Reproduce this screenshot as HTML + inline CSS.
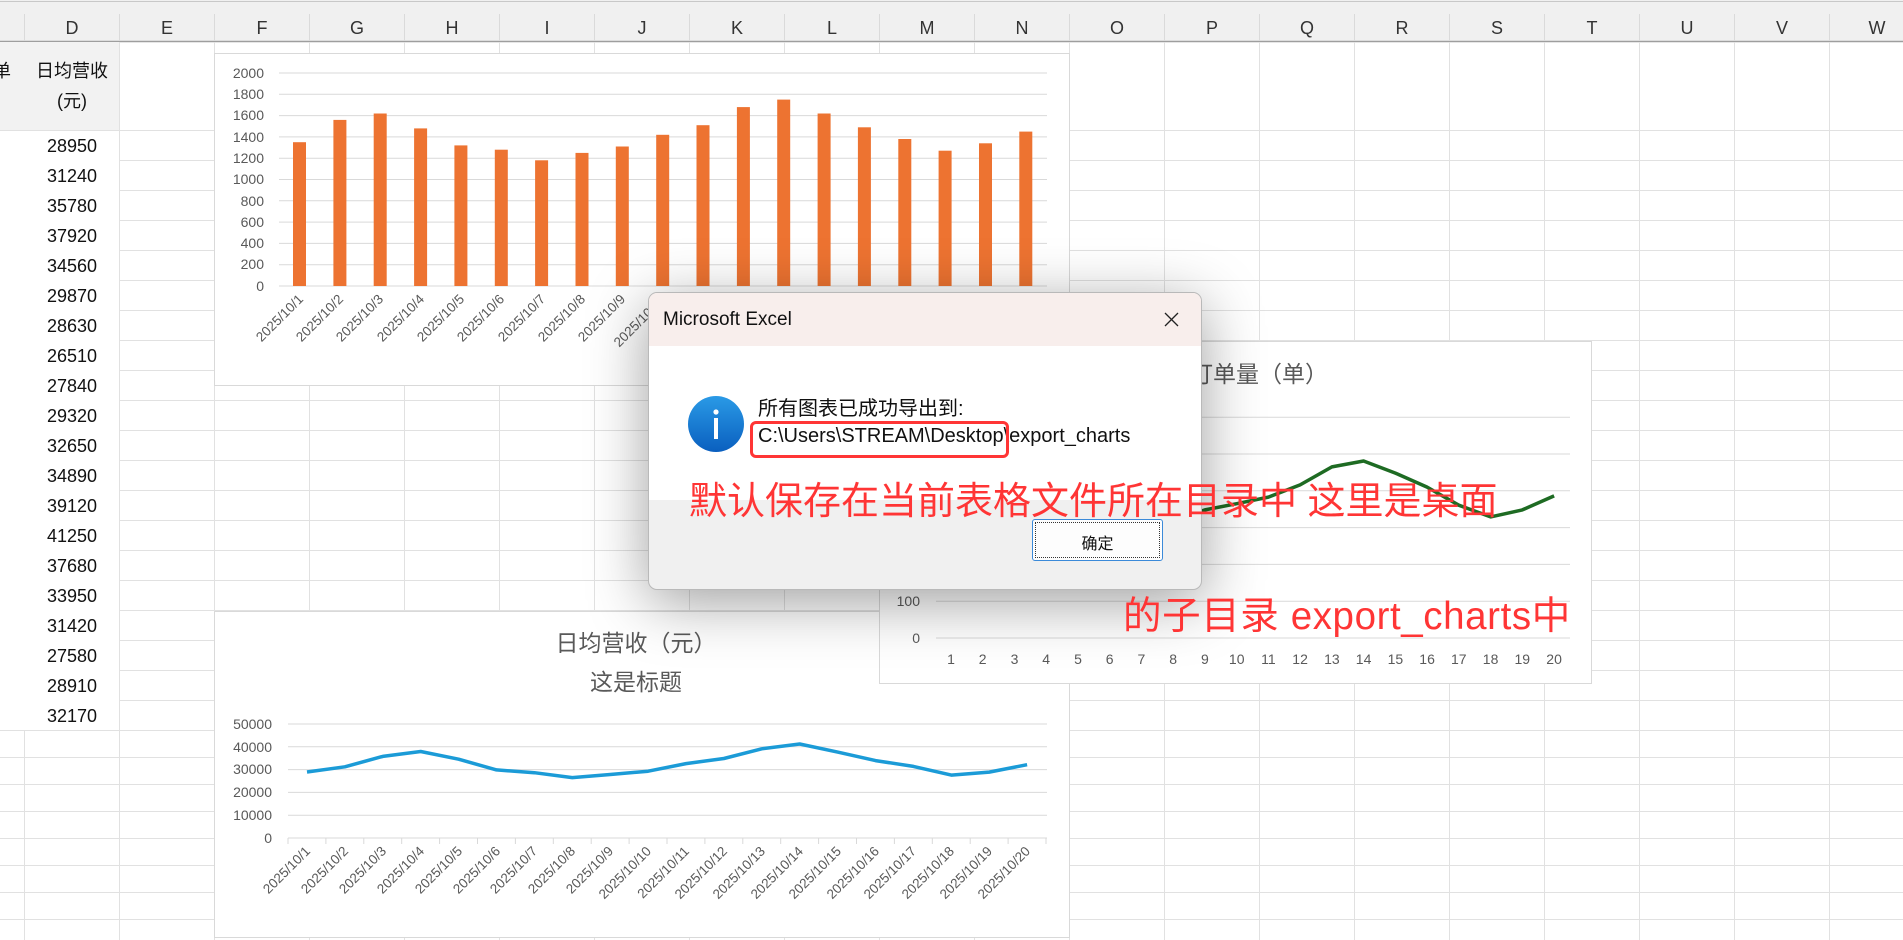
<!DOCTYPE html>
<html><head><meta charset="utf-8"><style>
body{margin:0;width:1903px;height:940px;overflow:hidden;background:#fff;font-family:"Liberation Sans","Noto Sans CJK SC",sans-serif;position:relative}
svg{position:absolute;left:0;top:0}
.dlg{position:absolute;left:648px;top:292px;width:552px;height:296px;border:1px solid #b9b9b9;border-radius:9px;background:#f0f0f0;box-shadow:0 12px 60px rgba(0,0,0,.38);overflow:hidden}
.red{position:absolute;color:#ff3535;font-size:38px;white-space:nowrap;font-family:"Liberation Sans","Noto Sans CJK SC",sans-serif;line-height:1}
</style></head><body>
<svg width="1903" height="940" font-family="Liberation Sans, Noto Sans CJK SC, sans-serif">
<rect x="0" y="0" width="1903" height="42" fill="#f0f0f0"/>
<line x1="0" y1="1.5" x2="1903" y2="1.5" stroke="#c8c8c8"/>
<line x1="0" y1="41.5" x2="1903" y2="41.5" stroke="#9e9e9e" stroke-width="1.5"/>
<g stroke="#dadada">
<line x1="24.5" y1="14" x2="24.5" y2="41"/><line x1="119.5" y1="14" x2="119.5" y2="41"/><line x1="214.5" y1="14" x2="214.5" y2="41"/><line x1="309.5" y1="14" x2="309.5" y2="41"/><line x1="404.5" y1="14" x2="404.5" y2="41"/><line x1="499.5" y1="14" x2="499.5" y2="41"/><line x1="594.5" y1="14" x2="594.5" y2="41"/><line x1="689.5" y1="14" x2="689.5" y2="41"/><line x1="784.5" y1="14" x2="784.5" y2="41"/><line x1="879.5" y1="14" x2="879.5" y2="41"/><line x1="974.5" y1="14" x2="974.5" y2="41"/><line x1="1069.5" y1="14" x2="1069.5" y2="41"/><line x1="1164.5" y1="14" x2="1164.5" y2="41"/><line x1="1259.5" y1="14" x2="1259.5" y2="41"/><line x1="1354.5" y1="14" x2="1354.5" y2="41"/><line x1="1449.5" y1="14" x2="1449.5" y2="41"/><line x1="1544.5" y1="14" x2="1544.5" y2="41"/><line x1="1639.5" y1="14" x2="1639.5" y2="41"/><line x1="1734.5" y1="14" x2="1734.5" y2="41"/><line x1="1829.5" y1="14" x2="1829.5" y2="41"/>
</g>
<g font-size="18" fill="#333" text-anchor="middle">
<text x="72" y="34">D</text><text x="167" y="34">E</text><text x="262" y="34">F</text><text x="357" y="34">G</text><text x="452" y="34">H</text><text x="547" y="34">I</text><text x="642" y="34">J</text><text x="737" y="34">K</text><text x="832" y="34">L</text><text x="927" y="34">M</text><text x="1022" y="34">N</text><text x="1117" y="34">O</text><text x="1212" y="34">P</text><text x="1307" y="34">Q</text><text x="1402" y="34">R</text><text x="1497" y="34">S</text><text x="1592" y="34">T</text><text x="1687" y="34">U</text><text x="1782" y="34">V</text><text x="1877" y="34">W</text>
</g>
<g stroke="#e1e1e1">
<line x1="119.5" y1="42" x2="119.5" y2="940"/><line x1="214.5" y1="42" x2="214.5" y2="940"/><line x1="309.5" y1="42" x2="309.5" y2="940"/><line x1="404.5" y1="42" x2="404.5" y2="940"/><line x1="499.5" y1="42" x2="499.5" y2="940"/><line x1="594.5" y1="42" x2="594.5" y2="940"/><line x1="689.5" y1="42" x2="689.5" y2="940"/><line x1="784.5" y1="42" x2="784.5" y2="940"/><line x1="879.5" y1="42" x2="879.5" y2="940"/><line x1="974.5" y1="42" x2="974.5" y2="940"/><line x1="1069.5" y1="42" x2="1069.5" y2="940"/><line x1="1164.5" y1="42" x2="1164.5" y2="940"/><line x1="1259.5" y1="42" x2="1259.5" y2="940"/><line x1="1354.5" y1="42" x2="1354.5" y2="940"/><line x1="1449.5" y1="42" x2="1449.5" y2="940"/><line x1="1544.5" y1="42" x2="1544.5" y2="940"/><line x1="1639.5" y1="42" x2="1639.5" y2="940"/><line x1="1734.5" y1="42" x2="1734.5" y2="940"/><line x1="1829.5" y1="42" x2="1829.5" y2="940"/>
<line x1="24.5" y1="730" x2="24.5" y2="940"/>
<line x1="0" y1="130.5" x2="1903" y2="130.5"/><line x1="0" y1="160.5" x2="1903" y2="160.5"/><line x1="0" y1="190.5" x2="1903" y2="190.5"/><line x1="0" y1="220.5" x2="1903" y2="220.5"/><line x1="0" y1="250.5" x2="1903" y2="250.5"/><line x1="0" y1="280.5" x2="1903" y2="280.5"/><line x1="0" y1="310.5" x2="1903" y2="310.5"/><line x1="0" y1="340.5" x2="1903" y2="340.5"/><line x1="0" y1="370.5" x2="1903" y2="370.5"/><line x1="0" y1="400.5" x2="1903" y2="400.5"/><line x1="0" y1="430.5" x2="1903" y2="430.5"/><line x1="0" y1="460.5" x2="1903" y2="460.5"/><line x1="0" y1="490.5" x2="1903" y2="490.5"/><line x1="0" y1="520.5" x2="1903" y2="520.5"/><line x1="0" y1="550.5" x2="1903" y2="550.5"/><line x1="0" y1="580.5" x2="1903" y2="580.5"/><line x1="0" y1="610.5" x2="1903" y2="610.5"/><line x1="0" y1="640.5" x2="1903" y2="640.5"/><line x1="0" y1="670.5" x2="1903" y2="670.5"/><line x1="0" y1="700.5" x2="1903" y2="700.5"/><line x1="0" y1="730.5" x2="1903" y2="730.5"/><line x1="0" y1="757.5" x2="1903" y2="757.5"/><line x1="0" y1="784.5" x2="1903" y2="784.5"/><line x1="0" y1="811.5" x2="1903" y2="811.5"/><line x1="0" y1="838.5" x2="1903" y2="838.5"/><line x1="0" y1="865.5" x2="1903" y2="865.5"/><line x1="0" y1="892.5" x2="1903" y2="892.5"/><line x1="0" y1="919.5" x2="1903" y2="919.5"/>
</g>
<rect x="0" y="42" width="119" height="88" fill="#f2f2f2"/>
<rect x="0" y="131" width="119" height="599" fill="#fff"/>
<g font-size="18" fill="#111">
<text x="-7" y="77">单</text><text x="-6" y="107">)</text>
<text x="72" y="77" text-anchor="middle">日均营收</text><text x="72" y="107" text-anchor="middle">(元)</text>
</g>
<g font-size="18" fill="#111" text-anchor="end">
<text x="97" y="152">28950</text><text x="97" y="182">31240</text><text x="97" y="212">35780</text><text x="97" y="242">37920</text><text x="97" y="272">34560</text><text x="97" y="302">29870</text><text x="97" y="332">28630</text><text x="97" y="362">26510</text><text x="97" y="392">27840</text><text x="97" y="422">29320</text><text x="97" y="452">32650</text><text x="97" y="482">34890</text><text x="97" y="512">39120</text><text x="97" y="542">41250</text><text x="97" y="572">37680</text><text x="97" y="602">33950</text><text x="97" y="632">31420</text><text x="97" y="662">27580</text><text x="97" y="692">28910</text><text x="97" y="722">32170</text>
</g>

<rect x="214.5" y="53.5" width="855" height="332" fill="#fff" stroke="#d9d9d9"/>
<g stroke="#d9d9d9">
<line x1="279" y1="73" x2="1047" y2="73"/><line x1="279" y1="94.3" x2="1047" y2="94.3"/><line x1="279" y1="115.6" x2="1047" y2="115.6"/><line x1="279" y1="136.9" x2="1047" y2="136.9"/><line x1="279" y1="158.2" x2="1047" y2="158.2"/><line x1="279" y1="179.5" x2="1047" y2="179.5"/><line x1="279" y1="200.8" x2="1047" y2="200.8"/><line x1="279" y1="222.1" x2="1047" y2="222.1"/><line x1="279" y1="243.4" x2="1047" y2="243.4"/><line x1="279" y1="264.7" x2="1047" y2="264.7"/><line x1="279" y1="286" x2="1047" y2="286"/>
</g>
<g font-size="14" fill="#595959" text-anchor="end">
<text x="264" y="78">2000</text><text x="264" y="99">1800</text><text x="264" y="120">1600</text><text x="264" y="142">1400</text><text x="264" y="163">1200</text><text x="264" y="184">1000</text><text x="264" y="206">800</text><text x="264" y="227">600</text><text x="264" y="248">400</text><text x="264" y="269">200</text><text x="264" y="291">0</text>
</g>
<g fill="#ed7331">
<rect x="293" y="142.2" width="13" height="143.8"/><rect x="333.4" y="119.9" width="13" height="166.1"/><rect x="373.7" y="113.5" width="13" height="172.5"/><rect x="414.1" y="128.4" width="13" height="157.6"/><rect x="454.4" y="145.4" width="13" height="140.6"/><rect x="494.8" y="149.7" width="13" height="136.3"/><rect x="535.1" y="160.3" width="13" height="125.7"/><rect x="575.5" y="152.9" width="13" height="133.1"/><rect x="615.8" y="146.5" width="13" height="139.5"/><rect x="656.2" y="134.8" width="13" height="151.2"/><rect x="696.5" y="125.2" width="13" height="160.8"/><rect x="736.9" y="107.1" width="13" height="178.9"/><rect x="777.2" y="99.6" width="13" height="186.4"/><rect x="817.6" y="113.5" width="13" height="172.5"/><rect x="857.9" y="127.3" width="13" height="158.7"/><rect x="898.3" y="139" width="13" height="147"/><rect x="938.6" y="150.7" width="13" height="135.3"/><rect x="979" y="143.3" width="13" height="142.7"/><rect x="1019.3" y="131.6" width="13" height="154.4"/>
</g>
<g font-size="13.5" fill="#595959" text-anchor="end">
<text transform="translate(304,300) rotate(-45)">2025/10/1</text><text transform="translate(344,300) rotate(-45)">2025/10/2</text><text transform="translate(384,300) rotate(-45)">2025/10/3</text><text transform="translate(425,300) rotate(-45)">2025/10/4</text><text transform="translate(465,300) rotate(-45)">2025/10/5</text><text transform="translate(505,300) rotate(-45)">2025/10/6</text><text transform="translate(546,300) rotate(-45)">2025/10/7</text><text transform="translate(586,300) rotate(-45)">2025/10/8</text><text transform="translate(626,300) rotate(-45)">2025/10/9</text><text transform="translate(667,300) rotate(-45)">2025/10/10</text><text transform="translate(707,300) rotate(-45)">2025/10/11</text><text transform="translate(747,300) rotate(-45)">2025/10/12</text><text transform="translate(788,300) rotate(-45)">2025/10/13</text><text transform="translate(828,300) rotate(-45)">2025/10/14</text><text transform="translate(868,300) rotate(-45)">2025/10/15</text><text transform="translate(909,300) rotate(-45)">2025/10/16</text><text transform="translate(949,300) rotate(-45)">2025/10/17</text><text transform="translate(989,300) rotate(-45)">2025/10/18</text><text transform="translate(1030,300) rotate(-45)">2025/10/19</text>
</g>

<rect x="214.5" y="611.5" width="855" height="326" fill="#fff" stroke="#d9d9d9"/>
<g font-size="23" fill="#595959" text-anchor="middle">
<text x="636" y="651">日均营收（元）</text><text x="636" y="690">这是标题</text>
</g>
<g stroke="#d9d9d9">
<line x1="288" y1="724" x2="1047" y2="724"/><line x1="288" y1="746.8" x2="1047" y2="746.8"/><line x1="288" y1="769.6" x2="1047" y2="769.6"/><line x1="288" y1="792.4" x2="1047" y2="792.4"/><line x1="288" y1="815.2" x2="1047" y2="815.2"/><line x1="288" y1="838" x2="1047" y2="838"/>
<path d="M288 838v6M325.9 838v6M363.8 838v6M401.7 838v6M439.6 838v6M477.5 838v6M515.4 838v6M553.3 838v6M591.2 838v6M629.1 838v6M667 838v6M704.9 838v6M742.8 838v6M780.7 838v6M818.6 838v6M856.5 838v6M894.4 838v6M932.3 838v6M970.2 838v6M1008.1 838v6M1046 838v6"/>
</g>
<g font-size="14" fill="#595959" text-anchor="end">
<text x="272" y="729">50000</text><text x="272" y="752">40000</text><text x="272" y="774">30000</text><text x="272" y="797">20000</text><text x="272" y="820">10000</text><text x="272" y="843">0</text>
</g>
<polyline fill="none" stroke="#1b9bd7" stroke-width="3.5" stroke-linejoin="round" points="307,772 344.9,766.8 382.8,756.4 420.7,751.5 458.6,759.2 496.5,769.9 534.4,772.7 572.3,777.6 610.2,774.5 648.1,771.2 686,763.6 723.9,758.5 761.8,748.8 799.7,744 837.6,752.1 875.5,760.6 913.4,766.4 951.3,775.1 989.2,772.1 1027.1,764.7"/>
<g font-size="13.5" fill="#595959" text-anchor="end">
<text transform="translate(311,852) rotate(-45)">2025/10/1</text><text transform="translate(349,852) rotate(-45)">2025/10/2</text><text transform="translate(387,852) rotate(-45)">2025/10/3</text><text transform="translate(425,852) rotate(-45)">2025/10/4</text><text transform="translate(463,852) rotate(-45)">2025/10/5</text><text transform="translate(501,852) rotate(-45)">2025/10/6</text><text transform="translate(538,852) rotate(-45)">2025/10/7</text><text transform="translate(576,852) rotate(-45)">2025/10/8</text><text transform="translate(614,852) rotate(-45)">2025/10/9</text><text transform="translate(652,852) rotate(-45)">2025/10/10</text><text transform="translate(690,852) rotate(-45)">2025/10/11</text><text transform="translate(728,852) rotate(-45)">2025/10/12</text><text transform="translate(766,852) rotate(-45)">2025/10/13</text><text transform="translate(804,852) rotate(-45)">2025/10/14</text><text transform="translate(842,852) rotate(-45)">2025/10/15</text><text transform="translate(880,852) rotate(-45)">2025/10/16</text><text transform="translate(917,852) rotate(-45)">2025/10/17</text><text transform="translate(955,852) rotate(-45)">2025/10/18</text><text transform="translate(993,852) rotate(-45)">2025/10/19</text><text transform="translate(1031,852) rotate(-45)">2025/10/20</text>
</g>

<rect x="879.5" y="341.5" width="712" height="342" fill="#fff" stroke="#d9d9d9"/>
<text x="1236" y="382" font-size="23" fill="#595959" text-anchor="middle">日均订单量（单）</text>
<g stroke="#d9d9d9">
<line x1="936" y1="417.2" x2="1570" y2="417.2"/><line x1="936" y1="454" x2="1570" y2="454"/><line x1="936" y1="490.8" x2="1570" y2="490.8"/><line x1="936" y1="527.6" x2="1570" y2="527.6"/><line x1="936" y1="564.4" x2="1570" y2="564.4"/><line x1="936" y1="601.2" x2="1570" y2="601.2"/><line x1="936" y1="638" x2="1570" y2="638"/>
</g>
<g font-size="14" fill="#595959" text-anchor="end">
<text x="920" y="606">100</text><text x="920" y="643">0</text>
</g>
<polyline fill="none" stroke="#1e6b23" stroke-width="3.5" stroke-linejoin="round" points="951,527.6 982.7,520.2 1014.5,512.9 1046.2,509.2 1078,516.6 1109.7,523.9 1141.4,527.6 1173.2,520.2 1204.9,509.9 1236.7,503.7 1268.4,497.1 1300.1,484.9 1331.9,466.9 1363.6,461 1395.4,473.1 1427.1,487.1 1458.8,505.2 1490.6,516.9 1522.3,509.9 1554.1,495.9"/>
<g font-size="14" fill="#595959" text-anchor="middle">
<text x="951" y="664">1</text><text x="982.7" y="664">2</text><text x="1014.5" y="664">3</text><text x="1046.2" y="664">4</text><text x="1078" y="664">5</text><text x="1109.7" y="664">6</text><text x="1141.4" y="664">7</text><text x="1173.2" y="664">8</text><text x="1204.9" y="664">9</text><text x="1236.7" y="664">10</text><text x="1268.4" y="664">11</text><text x="1300.1" y="664">12</text><text x="1331.9" y="664">13</text><text x="1363.6" y="664">14</text><text x="1395.4" y="664">15</text><text x="1427.1" y="664">16</text><text x="1458.8" y="664">17</text><text x="1490.6" y="664">18</text><text x="1522.3" y="664">19</text><text x="1554.1" y="664">20</text>
</g>
</svg>

<div class="dlg">
  <div style="position:absolute;left:0;top:0;width:552px;height:53px;background:#f8eeec"></div>
  <div style="position:absolute;left:0;top:53px;width:552px;height:154px;background:#fff"></div>
  <div style="position:absolute;left:14px;top:16px;font-size:19px;color:#111">Microsoft Excel</div>
  <svg style="left:513px;top:17px" width="20" height="20"><path d="M3 3L16 16M16 3L3 16" stroke="#222" stroke-width="1.3"/></svg>
  <svg style="left:38px;top:102px" width="58" height="58">
    <defs><linearGradient id="g" x1="0" y1="0" x2="0" y2="1"><stop offset="0" stop-color="#2a9ae6"/><stop offset="1" stop-color="#0a5fbf"/></linearGradient></defs>
    <circle cx="29" cy="29" r="28" fill="url(#g)"/>
    <circle cx="29" cy="17" r="2.6" fill="#fff"/><rect x="27" y="23" width="4" height="21" fill="#fff"/>
  </svg>
  <div style="position:absolute;left:109px;top:103px;font-size:20px;color:#111;line-height:27px;white-space:nowrap">所有图表已成功导出到:<br>C:\Users\STREAM\Desktop\export_charts</div>
  <div style="position:absolute;left:101px;top:128px;width:253px;height:31px;border:3px solid #ff3535;border-radius:6px"></div>
  <div style="position:absolute;left:383px;top:226px;width:131px;height:42px;border:1px solid #3b8ad9;border-radius:3px;background:#fdfdfd;box-sizing:border-box">
    <div style="position:absolute;left:2px;top:2px;right:2px;bottom:2px;border:1px dotted #333"></div>
    <div style="position:absolute;left:0;right:0;top:10px;text-align:center;font-size:16px;color:#111">确定</div>
  </div>
</div>

<div class="red" style="left:689px;top:483px">默认保存在当前表格文件所在目录中 这里是桌面</div>
<div class="red" style="left:1123px;top:598px;font-size:38.5px;letter-spacing:0.6px">的子目录 export_charts中</div>
</body></html>
